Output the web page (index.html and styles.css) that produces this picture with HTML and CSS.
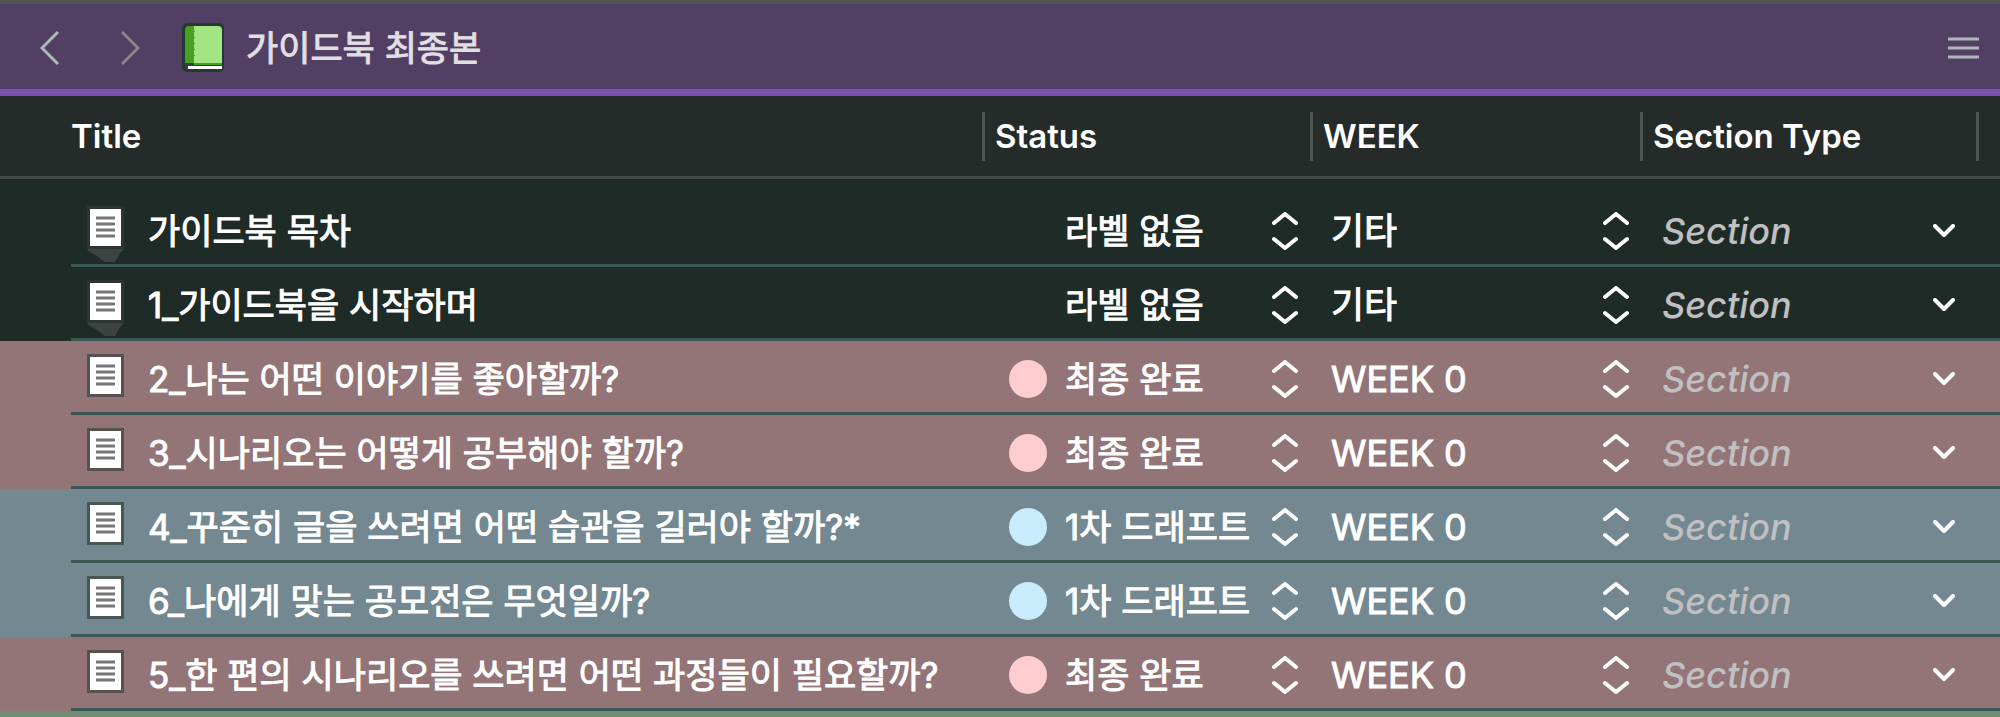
FILE: index.html
```html
<!DOCTYPE html>
<html lang="ko">
<head>
    <meta charset="UTF-8">
    <meta name="viewport" content="width=device-width, initial-scale=1.0">
    <title>가이드북 최종본</title>
    <link rel="stylesheet" href="styles.css">
</head>
<body>
    <svg class="symbols" aria-hidden="true">
        <symbol id="page" viewBox="0 0 37 56">
            <path class="page-shadow" d="M0 40H37V43L34 46L28 56H18L10 50L1 45Z"/>
            <rect class="page-edge" x="0" y="0" width="37" height="43"/>
            <rect x="3" y="3" width="31" height="37" fill="#fff"/>
            <path d="M9 12H28M9 18H28M9 24H28M9 30H28" stroke="#77757a" stroke-width="3"/>
        </symbol>
        <symbol id="updown" viewBox="0 0 26 38">
            <path d="M2 11L13 2L24 11M2 27L13 36L24 27" fill="none" stroke="#fff" stroke-width="4" stroke-linecap="round" stroke-linejoin="round"/>
        </symbol>
        <symbol id="down" viewBox="0 0 22 14">
            <path d="M2 2L11 11L20 2" fill="none" stroke="#fff" stroke-width="4" stroke-linecap="round" stroke-linejoin="round"/>
        </symbol>
    </svg>

    <header class="toolbar">
        <button class="nav-button" type="button" aria-label="뒤로">
            <svg width="20" height="34" viewBox="0 0 20 34"><path d="M18 1L2 17L18 33" fill="none" stroke="#aeb9ba" stroke-width="3"/></svg>
        </button>
        <button class="nav-button" type="button" aria-label="앞으로">
            <svg width="20" height="34" viewBox="0 0 20 34"><path d="M2 1L18 17L2 33" fill="none" stroke="#8a858c" stroke-width="3"/></svg>
        </button>
        <svg class="book" width="42" height="49" viewBox="0 0 42 49" aria-hidden="true">
            <rect width="42" height="49" rx="5" fill="#26382f"/>
            <path d="M12 3H36Q40 3 40 7V40H12Z" fill="#a3e583"/>
            <path d="M7 3H12V40H40V42H12V40H3V7Q3 3 7 3Z" fill="#49a020"/>
            <path d="M3 40H12V46H7Q3 46 3 43Z" fill="#34443c"/>
            <rect x="6" y="43" width="34" height="3" fill="#fff"/>
            <path d="M12 8V38" stroke="#49a020" stroke-dasharray="1 5" stroke-width="2"/>
        </svg>
        <h1>가이드북 최종본</h1>
        <button class="menu-button" type="button" aria-label="메뉴">
            <svg width="32" height="24" viewBox="0 0 32 24"><path d="M0 3H31M0 12H31M0 21H31" stroke="#b2b5b9" stroke-width="3"/></svg>
        </button>
    </header>

    <table class="outline-table">
        <colgroup>
            <col class="col-gutter">
            <col>
            <col class="col-status">
            <col class="col-week">
            <col class="col-section">
            <col class="col-end">
        </colgroup>
        <thead>
            <tr>
                <td></td>
                <th>Title</th>
                <th><span class="divided">Status</span></th>
                <th><span class="divided">WEEK</span></th>
                <th><span class="divided">Section Type</span></th>
                <td><span class="divided"></span></td>
            </tr>
        </thead>
        <tbody id="outlineRows"></tbody>
    </table>

    <script>
        const rows = [
            { title: '가이드북 목차', label: 'none', status: '라벨 없음', week: '기타' },
            { title: '1_가이드북을 시작하며', label: 'none', status: '라벨 없음', week: '기타' },
            { title: '2_나는 어떤 이야기를 좋아할까?', label: 'pink', status: '최종 완료', week: 'WEEK 0' },
            { title: '3_시나리오는 어떻게 공부해야 할까?', label: 'pink', status: '최종 완료', week: 'WEEK 0' },
            { title: '4_꾸준히 글을 쓰려면 어떤 습관을 길러야 할까?*', label: 'blue', status: '1차 드래프트', week: 'WEEK 0' },
            { title: '6_나에게 맞는 공모전은 무엇일까?', label: 'blue', status: '1차 드래프트', week: 'WEEK 0' },
            { title: '5_한 편의 시나리오를 쓰려면 어떤 과정들이 필요할까?', label: 'pink', status: '최종 완료', week: 'WEEK 0' }
        ];

        document.getElementById('outlineRows').innerHTML = rows.map(row => `
            <tr class="row-${row.label}">
                <td class="gutter"></td>
                <td><div class="cell title-cell">
                    <svg class="page" aria-hidden="true"><use href="#page"/></svg>
                    <span>${row.title}</span>
                </div></td>
                <td><div class="cell status-cell">
                    <span class="dot"></span>
                    <select aria-label="Status"><option>${row.status}</option></select>
                    <svg class="updown" aria-hidden="true"><use href="#updown"/></svg>
                </div></td>
                <td><div class="cell week-cell">
                    <select aria-label="WEEK"><option>${row.week}</option></select>
                    <svg class="updown" aria-hidden="true"><use href="#updown"/></svg>
                </div></td>
                <td><div class="cell section-cell">
                    <input type="text" placeholder="Section" aria-label="Section Type">
                    <button type="button" aria-label="Section Type 목록"><svg class="down"><use href="#down"/></svg></button>
                </div></td>
                <td></td>
            </tr>
        `).join('');
    </script>
</body>
</html>
```
FILE: styles.css
```css
* {
    box-sizing: border-box;
}

body {
    margin: 0;
    font-family: Inter, "Noto Sans CJK KR", sans-serif;
    font-size: 35px;
    font-weight: 400;
    line-height: 48px;
    color: white;
    background: #728c73;
}

svg {
    display: block;
    flex: none;
}

.symbols {
    position: absolute;
    width: 0;
    height: 0;
}

button, select, input {
    margin: 0;
    padding: 0;
    border: none;
    background: none;
    color: inherit;
    font: inherit;
}

/* toolbar */
.toolbar {
    display: flex;
    align-items: center;
    height: 96px;
    padding: 2px 20px 0 40px;
    background: #514063;
    border-top: 4px solid #50554f;
    border-bottom: 7px solid #7a52b3;
}

.nav-button {
    margin-right: 60px;
}

.nav-button + .book {
    margin-left: -18px;
}

.toolbar h1 {
    flex: 1;
    margin: 0 0 0 22px;
    font-size: 35px;
    font-weight: 400;
    color: #e2dfe4;
    -webkit-text-stroke: 1px;
}

/* table */
.outline-table {
    width: 100%;
    table-layout: fixed;
    border-collapse: separate;
    border-spacing: 0;
}

.col-gutter {
    width: 71px;
}

.col-status {
    width: 328px;
}

.col-week {
    width: 330px;
}

.col-section {
    width: 336px;
}

.col-end {
    width: 24px;
}

.outline-table th, .outline-table td {
    padding: 0;
    text-align: left;
}

.outline-table thead th, .outline-table thead td {
    height: 83px;
    background: #252b29;
    border-bottom: 3px solid #454b49;
    font-size: 33px;
    font-weight: 600;
}

.divided {
    display: block;
    height: 49px;
    padding-left: 10px;
    border-left: 3px solid #505553;
}

.outline-table tbody td {
    height: 74px;
    border-bottom: 3px solid #3b5854;
}

.outline-table tbody tr:first-child td {
    height: 88px;
    padding-top: 14px;
}

.outline-table tbody .gutter {
    border-bottom: none;
}

.row-none {
    --edge: #2c3532;
    --shadow: #3c4341;
    background: #1f2b27;
}

.row-pink {
    --edge: #55524f;
    background: #937577;
}

.row-blue {
    --edge: #465754;
    background: #738890;
}

.cell {
    display: flex;
    align-items: center;
    height: 71px;
    padding-top: 4px;
    -webkit-text-stroke: 1px;
}

.title-cell {
    gap: 24px;
    padding-left: 16px;
    white-space: nowrap;
}

.status-cell {
    gap: 18px;
    padding-left: 27px;
    padding-right: 12px;
}

.week-cell {
    padding-left: 21px;
    padding-right: 11px;
}

.section-cell {
    padding-left: 22px;
    padding-right: 21px;
    -webkit-text-stroke: 0;
}

.cell select, .cell input {
    flex: 1;
    min-width: 0;
    height: 48px;
    appearance: none;
}

.week-cell select, .section-cell input {
    font-size: 36px;
}

.section-cell input {
    font-weight: 500;
}

.cell input::placeholder {
    color: #c1bfc1;
    font-style: italic;
    opacity: 1;
}

/* icons */
.page {
    width: 37px;
    height: 56px;
    margin-top: 9px;
    align-self: flex-start;
}

.page-edge {
    fill: var(--edge);
}

.page-shadow {
    fill: var(--shadow, none);
}

.dot {
    flex: none;
    width: 38px;
    height: 38px;
    border-radius: 50%;
}

.row-pink .dot {
    background: #ffcdd0;
}

.row-blue .dot {
    background: #c8ecfc;
}

.updown {
    width: 26px;
    height: 38px;
}

.down {
    width: 22px;
    height: 14px;
}
```
